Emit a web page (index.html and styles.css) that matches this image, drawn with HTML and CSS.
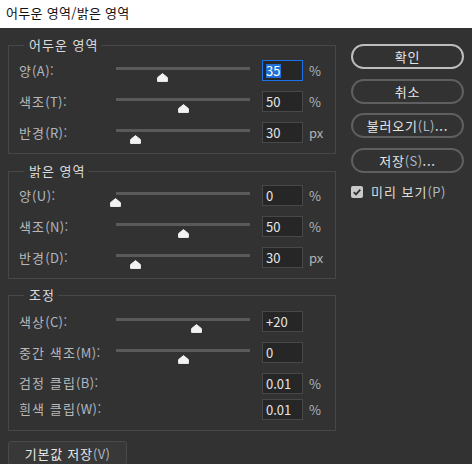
FILE: index.html
```html
<!DOCTYPE html>
<html lang="ko">
<head>
<meta charset="utf-8">
<link rel="stylesheet" href="styles.css">
</head>
<body>
<div class="titlebar">어두운 영역/밝은 영역</div>
<div class="main">
  <div class="left">
    <fieldset class="group g1">
      <legend>어두운 영역</legend>
      <div class="row">
        <span class="label">양<span class="mn">(A)</span>:</span>
        <div class="slider"><div class="track"></div><svg class="thumb" style="left:40.5px" viewBox="0 0 11 9" width="11" height="9"><path d="M5.5 0.6 L10.4 4.6 V8.4 H0.6 V4.6 Z"/></svg></div>
        <div class="input focused"><span class="sel">35</span></div>
        <span class="unit">%</span>
      </div>
      <div class="row">
        <span class="label">색조<span class="mn">(T)</span>:</span>
        <div class="slider"><div class="track"></div><svg class="thumb" style="left:61.5px" viewBox="0 0 11 9" width="11" height="9"><path d="M5.5 0.6 L10.4 4.6 V8.4 H0.6 V4.6 Z"/></svg></div>
        <div class="input">50</div>
        <span class="unit">%</span>
      </div>
      <div class="row">
        <span class="label">반경<span class="mn">(R)</span>:</span>
        <div class="slider"><div class="track"></div><svg class="thumb" style="left:13.5px" viewBox="0 0 11 9" width="11" height="9"><path d="M5.5 0.6 L10.4 4.6 V8.4 H0.6 V4.6 Z"/></svg></div>
        <div class="input">30</div>
        <span class="unit">px</span>
      </div>
    </fieldset>

    <fieldset class="group g2">
      <legend>밝은 영역</legend>
      <div class="row">
        <span class="label">양<span class="mn">(U)</span>:</span>
        <div class="slider"><div class="track"></div><svg class="thumb" style="left:-6px" viewBox="0 0 11 9" width="11" height="9"><path d="M5.5 0.6 L10.4 4.6 V8.4 H0.6 V4.6 Z"/></svg></div>
        <div class="input">0</div>
        <span class="unit">%</span>
      </div>
      <div class="row">
        <span class="label">색조<span class="mn">(N)</span>:</span>
        <div class="slider"><div class="track"></div><svg class="thumb" style="left:61.5px" viewBox="0 0 11 9" width="11" height="9"><path d="M5.5 0.6 L10.4 4.6 V8.4 H0.6 V4.6 Z"/></svg></div>
        <div class="input">50</div>
        <span class="unit">%</span>
      </div>
      <div class="row">
        <span class="label">반경<span class="mn">(D)</span>:</span>
        <div class="slider"><div class="track"></div><svg class="thumb" style="left:13.5px" viewBox="0 0 11 9" width="11" height="9"><path d="M5.5 0.6 L10.4 4.6 V8.4 H0.6 V4.6 Z"/></svg></div>
        <div class="input">30</div>
        <span class="unit">px</span>
      </div>
    </fieldset>

    <fieldset class="group g3">
      <legend>조정</legend>
      <div class="row">
        <span class="label">색상<span class="mn">(C)</span>:</span>
        <div class="slider"><div class="track"></div><svg class="thumb" style="left:74.5px" viewBox="0 0 11 9" width="11" height="9"><path d="M5.5 0.6 L10.4 4.6 V8.4 H0.6 V4.6 Z"/></svg></div>
        <div class="input">+20</div>
      </div>
      <div class="row">
        <span class="label">중간 색조<span class="mn">(M)</span>:</span>
        <div class="slider"><div class="track"></div><svg class="thumb" style="left:61.5px" viewBox="0 0 11 9" width="11" height="9"><path d="M5.5 0.6 L10.4 4.6 V8.4 H0.6 V4.6 Z"/></svg></div>
        <div class="input">0</div>
      </div>
      <div class="row short first-short">
        <span class="label">검정 클립<span class="mn">(B)</span>:</span>
        <div class="spacer"></div>
        <div class="input">0.01</div>
        <span class="unit">%</span>
      </div>
      <div class="row short">
        <span class="label">흰색 클립<span class="mn">(W)</span>:</span>
        <div class="spacer"></div>
        <div class="input">0.01</div>
        <span class="unit">%</span>
      </div>
    </fieldset>

    <div class="default-btn">기본값 저장<span class="mn">(V)</span></div>
  </div>

  <div class="right">
    <div class="btn primary">확인</div>
    <div class="btn">취소</div>
    <div class="btn">불러오기<span class="mn">(L)</span>...</div>
    <div class="btn">저장<span class="mn">(S)</span>...</div>
    <div class="check">
      <svg class="box" viewBox="0 0 12 12" width="12" height="12"><rect x="0" y="0" width="12" height="12" rx="2" fill="#cacaca"/><path d="M2.8 6.2 L5 8.4 L9.3 3.6" fill="none" stroke="#333" stroke-width="1.8"/></svg>
      <span>미리 보기<span class="mn">(P)</span></span>
    </div>
  </div>
</div>
</body>
</html>
```

FILE: styles.css
```css
html, body {
  margin: 0;
  padding: 0;
}
body {
  width: 472px;
  height: 464px;
  overflow: hidden;
  background: #323232;
  font-family: "Noto Sans CJK KR", "Noto Sans", sans-serif;
  font-size: 13px;
  color: #b8b8b8;
}
.titlebar {
  height: 28px;
  background: #ffffff;
  color: #111;
  font-size: 13px;
  line-height: 26px;
  padding-left: 6px;
  letter-spacing: 0.3px;
}
.main {
  display: flex;
}
.left {
  width: 328px;
  margin-left: 8px;
  padding-top: 8px;
}
.group {
  margin: 0;
  border: 1px solid #474747;
  padding: 1px 0 5px 10px;
  min-width: 0;
}
.g2 { margin-top: 8px; padding-top: 0; }
.g3 { margin-top: 7px; padding-top: 2px; padding-bottom: 8px; }
.group legend {
  margin-left: 5px;
  padding: 0 3px 0 5px;
  height: 18px;
  line-height: 18px;
  font-size: 13px;
  color: #dcdcdc;
  letter-spacing: 1px;
}
.row {
  display: flex;
  align-items: center;
  height: 31px;
}
.row.short { height: 26px; }
.row.first-short { margin-top: 2px; }
.label {
  width: 97px;
  flex: none;
  line-height: 18px;
  letter-spacing: 1.1px;
  white-space: nowrap;
}
.mn {
  color: #aab6c4;
  letter-spacing: 0.4px;
}
.slider {
  position: relative;
  width: 134px;
  height: 21px;
  flex: none;
  margin-right: 12px;
}
.spacer {
  width: 134px;
  flex: none;
  margin-right: 12px;
}
.track {
  position: absolute;
  left: 0;
  right: 0;
  top: 7px;
  height: 3px;
  background: #5a5a5a;
}
.thumb {
  position: absolute;
  top: 12.5px;
  display: block;
}
.thumb path {
  fill: #f2f2f2;
  stroke: #f2f2f2;
  stroke-width: 1;
  stroke-linejoin: round;
}
.input {
  width: 41px;
  height: 21px;
  box-sizing: border-box;
  flex: none;
  border: 1px solid #484848;
  background: #262626;
  color: #e4e4e4;
  padding-left: 3px;
  line-height: 19px;
  font-size: 13px;
}
.input.focused {
  border-color: #1a73e8;
}
.sel {
  background: #1f6fd6;
  color: #ffffff;
  display: inline-block;
  line-height: 14px;
  padding: 0 1px 0 0;
}
.unit {
  margin-left: 6px;
  color: #b4b4b4;
}
.default-btn {
  margin-top: 10px;
  width: 119px;
  height: 24px;
  box-sizing: border-box;
  border: 1px solid #4a4a4a;
  border-radius: 3px;
  background: #383838;
  color: #e8e8e8;
  display: flex;
  align-items: center;
  justify-content: center;
  letter-spacing: 0.8px;
}
.right {
  width: 113px;
  margin-left: 15px;
  padding-top: 16px;
}
.btn {
  height: 25px;
  box-sizing: border-box;
  border: 2px solid #5f5f5f;
  border-radius: 13px;
  display: flex;
  align-items: center;
  justify-content: center;
  color: #e6e6e6;
  margin-bottom: 9.5px;
  letter-spacing: 0.8px;
}
.btn.primary {
  border-color: #bdbdbd;
}
.check {
  margin-top: 1px;
  display: flex;
  align-items: center;
  gap: 8px;
  color: #dcdcdc;
  letter-spacing: 1px;
}
.check .box { display: block; flex: none; }
```
